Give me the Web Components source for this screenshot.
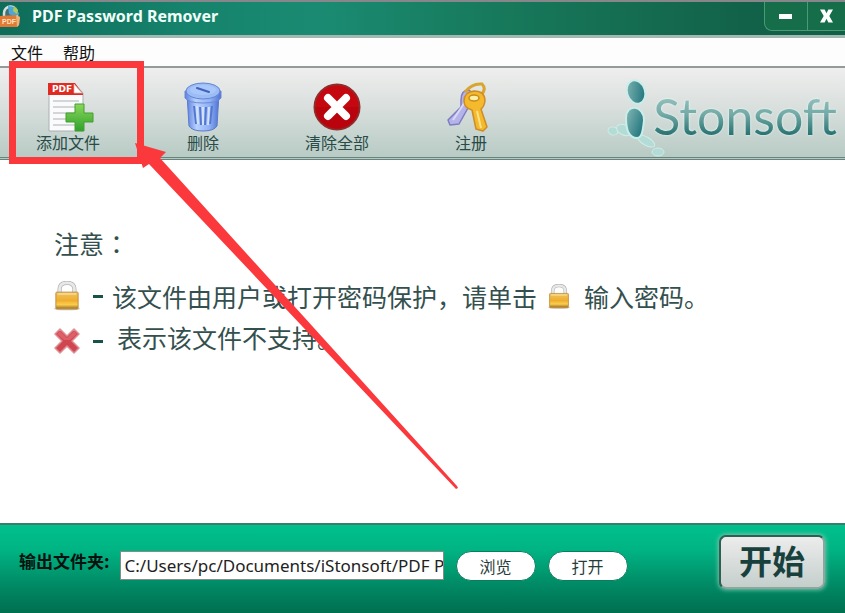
<!DOCTYPE html>
<html lang="zh-CN">
<head>
<meta charset="utf-8">
<title>PDF Password Remover</title>
<style>
html,body{height:100%;margin:0}
body{font-family:"Noto Sans","Noto Sans CJK SC",sans-serif;background:#fff;overflow:hidden}
</style>
</head>
<body>
<remover-app></remover-app>
<script>
const make=(name,html)=>customElements.define(name,class extends HTMLElement{
  constructor(){
    super();
    const t=document.createElement('template');
    t.innerHTML=html;
    this.attachShadow({mode:'open'}).appendChild(t.content.cloneNode(true));
  }
});

make('title-bar',`
<style>
:host{display:flex;justify-content:space-between;height:38px;box-sizing:border-box;border-top:2px solid #87868a;border-bottom:3px solid #a3b8b1;
background:linear-gradient(90deg,#0e6c59 0,#16836c 22%,#1a8b72 38%,#17785a 60%,#126249 88%,#106048);color:#fff}
.name{display:flex;align-items:center;gap:11px;padding-bottom:6px}
h1{margin:0;font:bold 16px/20px "Noto Sans",sans-serif;color:#f0fff9}
.win{display:flex;height:28px;border:1px solid #4a9a74;border-top:0;border-right:0;border-radius:0 0 0 8px;background:#156d49}
button{width:42px;padding:0;border:0;background:none;color:#fff;display:grid;place-items:center}
button+button{width:38px;border-left:1px solid #4a9a74}
svg{display:block}
</style>
<div class="name">
<svg width="21" height="24" viewBox="0 0 21 24"><path d="M4 12V9a6.500 6.500 0 0 1 13 0v3" fill="#456f74" stroke="#d7e2dd" stroke-width="2.500"/><path d="M8 2l8 1 3 7-4 3-6-3z" fill="#4aa7da"/><path d="M14 2l4 4-1 4-4-3z" fill="#b6c94e"/><path d="M0 12l16-1 4 2-1 8-2 2H0z" fill="#e07a35"/><path d="M16 11l4 2-1 8-2 2z" fill="#eeb27b"/><text x="2" y="20" font-size="7" font-weight="bold" font-family="Liberation Sans" fill="#ffe0bf">PDF</text></svg>
<h1><slot></slot></h1></div>
<div class="win"><button aria-label="最小化"><svg width="14" height="6"><rect width="13" height="5" y="1" fill="#fff"/></svg></button>
<button aria-label="关闭"><svg width="13" height="14" viewBox="0 0 14 14"><path d="M0 0h5l2 4 2-4h5l-4 7 4 7H9L7 10l-2 4H0l4-7z" fill="#fff"/></svg></button></div>`);

make('menu-bar',`
<style>
:host{display:flex;align-items:center;gap:20px;height:28px;box-sizing:border-box;padding-left:11px;background:#fdfdfd}
::slotted(button){border:0;padding:0;background:none;font:16px/24px "Noto Sans CJK SC",sans-serif;color:#111}
</style><slot></slot>`);

make('tool-button',`
<style>
:host{display:block}
button{display:grid;justify-items:center;width:100%;padding:0;border:0;background:none;font:16px/20px "Noto Sans CJK SC",sans-serif;color:#284b48}
.icon{height:50px;display:grid;place-items:center}
</style>
<button><span class="icon"><slot name="icon"></slot></span><span><slot></slot></span></button>`);

make('brand-logo',`
<style>
:host{display:flex;align-items:flex-start}
svg{display:block;overflow:visible}
span{font:50px/60px "Lato",sans-serif;margin-top:7px;margin-left:-8px;background:linear-gradient(#8fbcb8 14px,#74aaa7 28px,#3f8482 42px,#24706f 50px);-webkit-background-clip:text;background-clip:text;color:transparent;filter:drop-shadow(0 0 1px #e8fffb)}
</style>
<svg width="54" height="80" viewBox="0 0 54 80">
<defs><linearGradient id="b" x1="0" y1="0" x2="1" y2="0.6"><stop offset="0" stop-color="#88b9b7"/><stop offset="1" stop-color="#23777f"/></linearGradient></defs>
<g fill="#b4dcd7" stroke="#d0ece7" stroke-width="1"><ellipse cx="6" cy="52" rx="5" ry="4" transform="rotate(15 6 52)"/><ellipse cx="17" cy="51" rx="8" ry="5" transform="rotate(25 17 51)"/><ellipse cx="39" cy="62" rx="10" ry="4" transform="rotate(30 39 62)"/><ellipse cx="51" cy="73" rx="6" ry="4"/></g>
<g fill="url(#b)" stroke="#c9eee9" stroke-width="2"><ellipse cx="29" cy="13" rx="9" ry="12" transform="rotate(-18 29 13)"/><path d="M19 39c0-15 18-13 18 2-1 10-2 18-7 18-9 0-11-11-11-20z"/></g></svg><span>Stonsoft</span>`);

make('lock-icon',`
<style>:host{display:inline-block}svg{display:block;width:100%}</style>
<svg viewBox="0 0 28 32"><defs><linearGradient id="g" x1="0" y1="0" x2="0" y2="1"><stop offset="0" stop-color="#ecc568"/><stop offset=".5" stop-color="#f0ad2d"/><stop offset=".75" stop-color="#f9cf4d"/><stop offset="1" stop-color="#9b6a24"/></linearGradient></defs>
<path d="M6 14V9Q6 2 14 2t8 7v5" fill="none" stroke="#b5b3b3" stroke-width="4.500"/><path d="M6 14V9Q6 2 14 2t8 7v5" fill="none" stroke="#e8e8e8" stroke-width="3"/><ellipse cx="14" cy="30" rx="14" ry="1.600" fill="#c9bca5"/><rect x="2" y="12" width="24" height="18" rx="1" fill="url(#g)" stroke="#c08b3a"/><path d="M4 14h20" stroke="#fff0b0"/></svg>`);

make('notice-panel',`
<style>
:host{display:block;box-sizing:border-box;padding:68px 40px 0 54px;color:#34504e;font:25px/30px "Noto Sans CJK SC",sans-serif}
h2{margin:0;font:inherit}
h2 span{font-family:"Noto Sans CJK TC",sans-serif}
.row{display:flex;align-items:center;height:42px;white-space:nowrap}
.first{margin-top:18px;height:40px}
.big{width:26px}
.small{width:22px;margin:2px 14px 0 11px}
i{width:10px;height:3px;background:#175348;margin:0 9px 0 13px}
.x i{margin-right:14px;margin-top:8px}
.x svg{margin-top:8px}
</style>
<h2>注意<span lang="zh-TW">：</span></h2>
<div class="row first"><lock-icon class="big"></lock-icon><i></i><span>该文件由用户或打开密码保护，请单击</span><lock-icon class="small"></lock-icon><span>输入密码。</span></div>
<div class="row x"><svg width="26" height="26" viewBox="0 0 26 26"><path d="M6 1l7 7 7-7 5 5-7 7 7 7-5 5-7-7-7 7-5-5 7-7-7-7z" fill="#cf4650" stroke="#e08d93" stroke-width="1.500" stroke-linejoin="round"/><path d="M6 3l7 7 7-7 3 3-7 6H10L3 6z" fill="#dd6068"/></svg><i></i><span>表示该文件不支持。</span></div>`);

make('output-bar',`
<style>
:host{display:flex;align-items:flex-start;box-sizing:border-box;height:90px;padding:0 20px 0 19px;border-top:2px solid #397f6b;background:linear-gradient(#00c08d,#00b483 28%,#008a65 68%,#006f50)}
label{font:bold 17px/20px "Noto Sans CJK SC",sans-serif;margin:26px 10px 0 0;color:#03120e;white-space:nowrap}
input{flex:0 1 324px;min-width:80px;height:29px;box-sizing:border-box;margin-top:26px;padding:0 0 0 4px;border:1px solid #8b8b86;border-radius:0;background:#fff;font:17px/24px "Noto Sans",sans-serif;color:#222}
.pill{width:80px;height:30px;margin:26px 0 0 12px;padding:0;border:1px solid #0c7c5e;border-radius:15px;background:#fff;font:16px/24px "Noto Sans CJK SC",sans-serif;color:#263c3a}
.start{width:106px;height:54px;margin:10px 0 0 auto;padding:0 0 4px;border:2px solid #315e51;border-right-color:#8fa59d;border-bottom-color:#8fa59d;border-radius:7px;background:linear-gradient(#ececec,#c4cfcc);box-shadow:0 0 4px 1px #70c7ad;font:bold 33px/40px "Noto Sans CJK SC",sans-serif;color:#18403d}
</style>
<label for="folder">输出文件夹:</label><input id="folder" value="C:/Users/pc/Documents/iStonsoft/PDF P">
<button class="pill">浏览</button><button class="pill">打开</button><button class="start">开始</button>`);

make('callout-mark',`
<style>:host{position:absolute;left:9px;top:61px;pointer-events:none}svg{display:block}</style>
<svg width="452" height="430" viewBox="0 0 452 430"><path d="M3.500 3.500h128v96h-128z" fill="none" stroke="#fb383c" stroke-width="7"/><path d="M126 82l31 9-6 6L448 425l1 2-2 1L140 103l-6 4z" fill="#fb383c"/></svg>`);

make('remover-app',`
<style>
:host{position:relative;display:flex;flex-direction:column;height:100vh;background:#fff}
.tools{display:flex;align-items:flex-start;box-sizing:border-box;height:94px;padding-top:14px;border-top:2px solid #939b98;border-bottom:1px solid #67837b;box-shadow:inset 0 -1px #b4c8c2,inset 0 -2px #67837b;background:linear-gradient(#eeeeed,#dde2e0 35%,#b7cac4)}
tool-button{flex:0 1 134px;min-width:70px}
tool-button:first-of-type{flex-basis:136px}
brand-logo{margin:-3px 8px 0 auto}
notice-panel{flex:1}
svg{display:block}
</style>
<title-bar>PDF Password Remover</title-bar>
<menu-bar><button>文件</button><button>帮助</button></menu-bar>
<div class="tools">
<tool-button><svg slot="icon" width="52" height="50" viewBox="-6 0 52 50"><defs><linearGradient id="p" x1="0" y1="0" x2="0" y2="1"><stop offset="0" stop-color="#8bd75b"/><stop offset="1" stop-color="#2fa12b"/></linearGradient></defs><path d="M1 2h26l8 9v38H1z" fill="#fbfbfb" stroke="#aab1b1"/><path d="M0 1h27l8 11v1H0z" fill="#e12b22"/><path d="M26 2v9h8z" fill="#fff" stroke="#c7b9b6" stroke-width=".7"/><path d="M5 19h26M5 25h26M5 31h24M5 37h22M5 43h22" stroke="#d3d6d8" stroke-width="2"/><text x="4" y="10" font-family="DejaVu Sans" font-weight="bold" font-size="9" fill="#fff">PDF</text><path d="M27 22h9v9h9v9h-9v9h-9v-9h-9v-9h9z" fill="url(#p)" stroke="#42a02f"/></svg>添加文件</tool-button>
<tool-button><svg slot="icon" width="38" height="50" viewBox="0 0 38 50"><defs><linearGradient id="t"><stop offset="0" stop-color="#5c82e0"/><stop offset=".3" stop-color="#b8d1fc"/><stop offset=".7" stop-color="#8fb0f5"/><stop offset="1" stop-color="#4f74d4"/></linearGradient></defs><path d="M3 12l2 32q3 5 14 5t14-5l2-32z" fill="url(#t)" stroke="#5a7acc"/><path d="M10 24l2 18M16 25l1 18M22 25l-1 18M28 24l-2 18" stroke="#5577cf" stroke-width="2"/><path d="M13 24l1 18M19 25v18M25 25l-1 18" stroke="#d0e2ff" stroke-width="2"/><path d="M1 9v7q4 5 18 5t18-5V9z" fill="url(#t)" stroke="#6c89d4"/><ellipse cx="19" cy="9" rx="17" ry="8" fill="#9bbcf5" stroke="#6484d4"/><ellipse cx="19" cy="8" rx="13" ry="5" fill="#a9c7fa"/><path d="M13 6l12 4" stroke="#3f63b8" stroke-width="2" stroke-linecap="round"/></svg>删除</tool-button>
<tool-button><svg slot="icon" width="48" height="48" viewBox="0 0 48 48"><circle cx="24" cy="24" r="22.500" fill="#c50710" stroke="#902d2d" stroke-width="2"/><path d="M2 24a22 22 0 0 0 44 0z" fill="#a70009" opacity=".35"/><path d="M15 15l18 18M33 15L15 33" stroke="#fff" stroke-width="8" stroke-linecap="round"/></svg>清除全部</tool-button>
<tool-button><svg slot="icon" width="50" height="50" viewBox="0 0 50 50"><path d="M15 18q0-10 8-10l7 6-8 12-9 16-9 1-2-5 13-13z" fill="#b4b3ea" stroke="#807cc0" stroke-width="1.500" stroke-linejoin="round"/><path d="M19 20L7 38" stroke="#dad9fa" stroke-width="2"/><path d="M19 10Q26 1 36 2q5 5-1 11" fill="none" stroke="#d8a52e" stroke-width="3"/><path d="M18 19q0-9 10-10 11 0 11 10-1 6-4 8l6 18-4 4-7-2-4-19q-8-2-8-9z" fill="#f4b92c" stroke="#cf8d24" stroke-width="1.500" stroke-linejoin="round"/><ellipse cx="28" cy="16" rx="5" ry="3" fill="#fff0a7" stroke="#c98c1e" stroke-width="1.500"/><path d="M31 29l4 17" stroke="#ffe287" stroke-width="2"/></svg>注册</tool-button>
<brand-logo></brand-logo>
</div>
<notice-panel></notice-panel>
<output-bar></output-bar>
<callout-mark></callout-mark>`);
</script>
</body>
</html>
